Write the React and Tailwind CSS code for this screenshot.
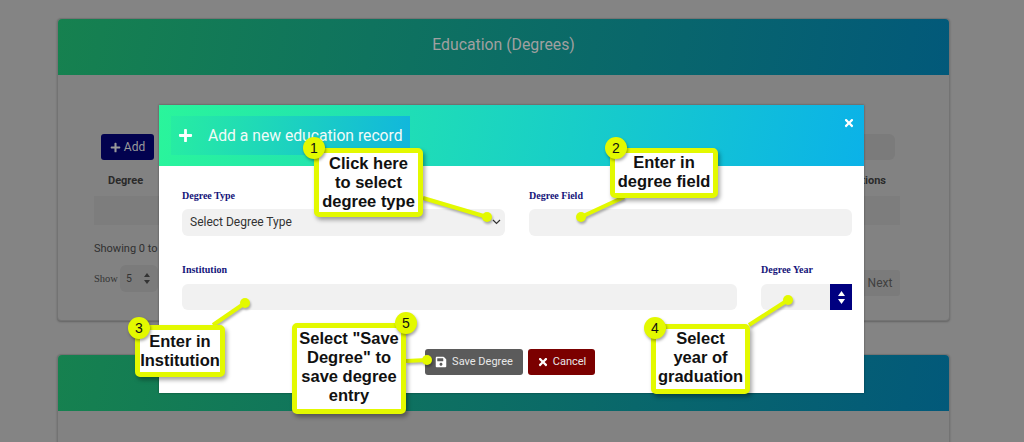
import React from 'react';
import { FaPlus, FaSave, FaTimes } from 'react-icons/fa';

const lines = [
  [423, 198, 487, 217],
  [624, 197, 581, 217],
  [213, 325, 245, 303],
  [749, 325, 788, 300],
  [406, 361, 427, 360],
];

// yellow step callout that sits over the dialog
const Callout = ({ num, className, badgeClassName, children }) => (
  <div className={`absolute flex items-center justify-center bg-white border-[5px] border-[#e3f900] rounded-[5px] shadow-[2px_3px_4px_rgba(0,0,0,0.35)] text-center font-['Liberation_Sans',sans-serif] font-bold text-[16.5px] leading-[19px] text-[#111] ${className}`}>
    <div>{children}</div>
    <div className={`absolute flex items-center justify-center w-[22px] h-[22px] rounded-full bg-[#e3f900] shadow-[1px_2px_3px_rgba(0,0,0,0.35)] font-normal text-[14px] leading-none ${badgeClassName}`}>
      {num}
    </div>
  </div>
);

const Label = ({ children }) => (
  <label className="block font-['Liberation_Serif',serif] font-bold text-[10px] leading-[12px] text-[#14147a]">{children}</label>
);

const Field = ({ className, children }) => (
  <div className={`bg-[#f1f1f1] rounded-[6px] ${className}`}>{children}</div>
);

const Card = ({ title, children }) => (
  <section className="border border-[#737373] rounded-[4px] bg-[#828282] shadow-[0_1px_2px_rgba(0,0,0,0.25)]">
    <header className="h-[56px] pb-[4px] flex items-center justify-center rounded-t-[4px] bg-[linear-gradient(100deg,#16814f,#02597a)] text-[15.8px] text-[#a0a0a0]">
      {title}
    </header>
    {children}
  </section>
);

export default function App() {
  return (
    <div className="relative w-[1024px] h-[442px] overflow-hidden bg-[#848484] font-['Roboto',sans-serif]">
      {/* page behind the dialog */}
      <div className="pl-[57px] pr-[74px] pt-[18px]">
        <Card title="Education (Degrees)">
          <div className="h-[245px] pt-[59px] pl-[36px] pr-[49px]">
            <div className="flex justify-between items-center pl-[7px] pr-[5px]">
              <button className="flex items-center gap-[3px] w-[53px] h-[26px] justify-center bg-[#02024f] rounded-[3px] text-[12px] text-[#9a9a9a]">
                <FaPlus className="text-[11px]" />
                Add
              </button>
              <div className="w-[300px] h-[26px] bg-[#7b7b7b] rounded-[6px]" />
            </div>
            <div className="flex justify-between mt-[14px] pl-[14px] font-bold text-[11px] leading-[13px] text-[#2a2a2a]">
              <span>Degree</span>
              <span className="pr-[14px]">Actions</span>
            </div>
            <div className="h-[29px] mt-[9px] bg-[#7d7d7d]" />
            <p className="mt-[17px] text-[11px] leading-[14px] text-[#303030]">Showing 0 to 0 of 0 entries</p>
            <div className="flex items-start justify-between mt-[9px]">
              <div className="flex items-center gap-[2px]">
                <span className="font-['Liberation_Serif',serif] text-[10.5px] text-[#333]">Show</span>
                <div className="flex items-center justify-between w-[38px] h-[27px] pl-[6px] pr-[8px] bg-[#7b7b7b] rounded-[6px] text-[10.5px] text-[#333]">
                  5
                  <svg width="6" height="11" viewBox="0 0 6 11" fill="#333"><path d="M3 0L6 4H0zM3 11L0 7h6z" /></svg>
                </div>
              </div>
              <div className="flex items-center justify-center w-[40px] h-[26px] mt-[5px] bg-[#7b7b7b] rounded-[3px] text-[12px] text-[#404040]">Next</div>
            </div>
          </div>
        </Card>
        <div className="mt-[33px]">
          <Card>
            <div className="h-[60px]" />
          </Card>
        </div>
      </div>

      {/* dialog */}
      <div className="absolute left-[159px] top-[105px] w-[705px] h-[288px] bg-white shadow-[0_0_2px_rgba(0,0,0,0.4)]">
        <div className="relative h-[61px] bg-[linear-gradient(100deg,#2af59b,#0bb2e8)]">
          <div className="absolute left-[12px] top-[11px] w-[239px] h-[39px] flex items-center bg-[linear-gradient(100deg,#27eda2,#11b6dd)]">
            <FaPlus className="ml-[7px] text-[15px] text-white" />
            <span className="ml-[15px] pt-[1px] text-[15.7px] text-[#f0fbf8]">Add a new education record</span>
          </div>
          <FaTimes className="absolute right-[9px] top-[12px] text-[12px] text-white" />
        </div>
        <div className="pl-[23px] pr-[12px] pt-[24px]">
          <div className="flex gap-[24px] h-[74px]">
            <div className="w-[323px] shrink-0">
              <Label>Degree Type</Label>
              <Field className="h-[27px] mt-[7px] pb-[2px] flex items-center justify-between pl-[8px] pr-[4px] text-[12px] text-[#333]">
                Select Degree Type
                <svg width="9" height="6" viewBox="0 0 9 6" fill="none" stroke="#333" strokeWidth="1.2"><path d="M1 1l3.5 3.5L8 1" /></svg>
              </Field>
            </div>
            <div className="w-[323px] shrink-0">
              <Label>Degree Field</Label>
              <Field className="h-[27px] mt-[7px]" />
            </div>
          </div>
          <div className="flex gap-[24px]">
            <div className="w-[555px] shrink-0">
              <Label>Institution</Label>
              <Field className="h-[26px] mt-[8px]" />
            </div>
            <div className="w-[91px] shrink-0">
              <Label>Degree Year</Label>
              <Field className="h-[26px] mt-[8px] flex justify-end rounded-r-none">
                <div className="flex flex-col items-center justify-center gap-[3px] w-[22px] bg-[#000080]">
                  <svg width="7" height="5" viewBox="0 0 7 5" fill="#fff"><path d="M3.5 0L7 5H0z" /></svg>
                  <svg width="7" height="5" viewBox="0 0 7 5" fill="#fff"><path d="M3.5 5L0 0h7z" /></svg>
                </div>
              </Field>
            </div>
          </div>
          <div className="flex gap-[5px] mt-[39px] pl-[243px] text-[11px] text-[#e8e8e8]">
            <button className="flex items-center gap-[5px] w-[98px] h-[26px] justify-center bg-[#5b5b5b] rounded-[3px]">
              <FaSave className="text-[12px] text-white" />
              Save Degree
            </button>
            <button className="flex items-center gap-[4px] w-[67px] h-[26px] justify-center bg-[#7b0000] rounded-[3px]">
              <FaTimes className="text-[12px] text-white" />
              Cancel
            </button>
          </div>
        </div>
      </div>

      {/* connector lines with their end dots */}
      <svg className="absolute inset-0" width="1024" height="442">
        <g style={{ filter: 'drop-shadow(1px 2px 1px rgba(0,0,0,0.3))' }}>
          {lines.map(([x1, y1, x2, y2]) => (
            <g key={`${x1}-${y1}`}>
              <line x1={x1} y1={y1} x2={x2} y2={y2} stroke="#e3f900" strokeWidth="4" />
              <circle cx={x2} cy={y2} r="5" fill="#e3f900" />
            </g>
          ))}
        </g>
      </svg>

      <Callout num="1" className="left-[314px] top-[148px] w-[109px] h-[69px]" badgeClassName="left-[-16px] top-[-16px]">
        Click here<br />to select<br />degree type
      </Callout>
      <Callout num="2" className="left-[610px] top-[148px] w-[108px] h-[50px] pb-[2px]" badgeClassName="left-[-10px] top-[-16px]">
        Enter in<br />degree field
      </Callout>
      <Callout num="3" className="left-[135px] top-[325px] w-[90px] h-[52px]" badgeClassName="left-[-12px] top-[-13px]">
        Enter in<br />Institution
      </Callout>
      <Callout num="4" className="left-[651px] top-[324px] w-[99px] h-[70px] pb-[4px]" badgeClassName="left-[-12px] top-[-12px]">
        Select<br />year of<br />graduation
      </Callout>
      <Callout num="5" className="left-[292px] top-[323px] w-[114px] h-[91px] pb-[4px]" badgeClassName="right-[-16px] top-[-16px]">
        Select "Save<br />Degree" to<br />save degree<br />entry
      </Callout>
    </div>
  );
}
